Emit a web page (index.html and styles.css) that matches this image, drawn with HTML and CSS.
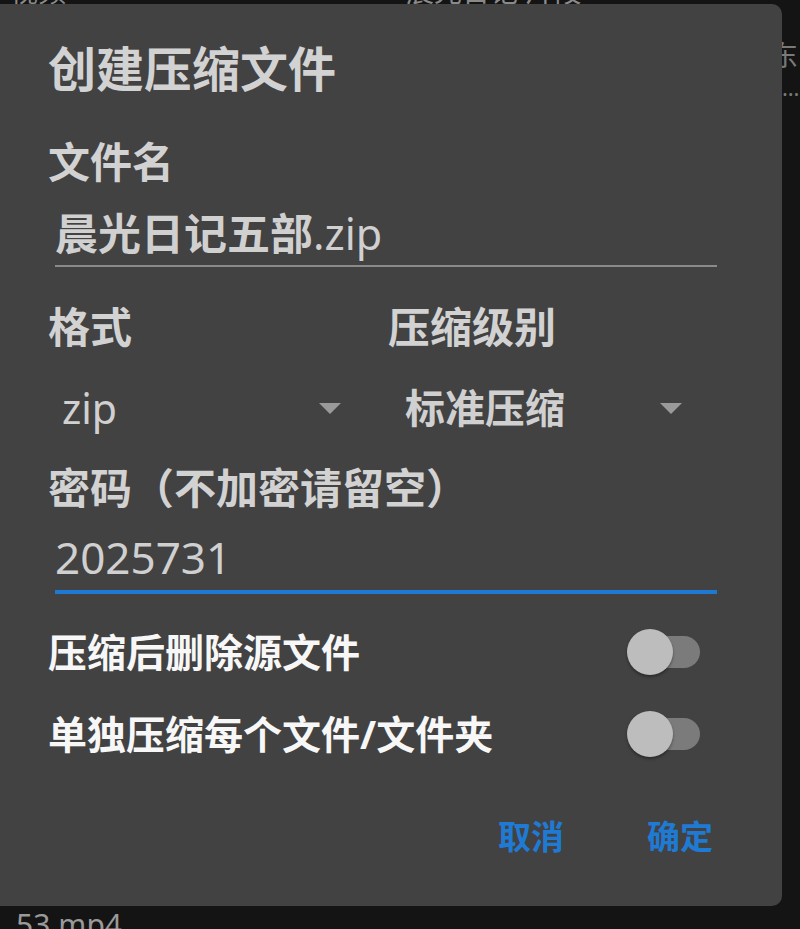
FILE: index.html
```html
<!DOCTYPE html>
<html lang="zh-CN">
<head>
<meta charset="utf-8">
<title>创建压缩文件</title>
<link rel="stylesheet" href="styles.css">
</head>
<body>
<div class="screen">
  <div class="bg">
    <div class="bg-top">
      <span class="bg-frag bg-frag-a">视频</span>
      <span class="bg-frag bg-frag-b">晨光日记·片段</span>
    </div>
    <div class="bg-side">
      <span class="bg-side-char">东</span>
      <span class="bg-side-dots">…</span>
    </div>
    <div class="bg-bottom">
      <span class="bg-file">53.mp4</span>
    </div>
  </div>

  <div class="dialog">
    <div class="title">创建压缩文件</div>

    <div class="label label-first">文件名</div>
    <div class="field"><span class="cjk">晨光日记五部</span>.zip</div>

    <div class="pair-labels">
      <div class="label">格式</div>
      <div class="label">压缩级别</div>
    </div>
    <div class="pair-spinners">
      <div class="spinner spinner-a"><span class="spinner-text latin">zip</span><span class="tri"></span></div>
      <div class="spinner spinner-b"><span class="spinner-text cjk">标准压缩</span><span class="tri"></span></div>
    </div>

    <div class="label label-pass">密码（不加密请留空）</div>
    <div class="field field-active">2025731</div>

    <div class="switch-row switch-row-first">
      <span class="switch-label">压缩后删除源文件</span>
      <span class="switch"><span class="track"></span><span class="thumb"></span></span>
    </div>
    <div class="switch-row switch-row-second">
      <span class="switch-label">单独压缩每个文件/文件夹</span>
      <span class="switch"><span class="track"></span><span class="thumb"></span></span>
    </div>

    <div class="actions">
      <span class="btn">取消</span>
      <span class="btn">确定</span>
    </div>
  </div>
</div>
</body>
</html>
```

FILE: styles.css
```css
* { box-sizing: border-box; }

html, body {
  margin: 0;
  padding: 0;
  background: #141414;
}

body {
  width: 800px;
  height: 929px;
  overflow: hidden;
  font-family: "Noto Sans", "Noto Sans CJK SC", sans-serif;
}

.screen {
  position: relative;
  width: 800px;
  height: 929px;
  overflow: hidden;
}

/* background file list (mostly covered by the dialog) */
.bg {
  display: flex;
  flex-direction: column;
  height: 929px;
  color: #8a8a8a;
}

.bg-top {
  display: flex;
  height: 30px;
  margin-top: -24px;
  font-size: 28px;
  line-height: 30px;
}

.bg-frag-a { margin-left: 10px; }
.bg-frag-b { margin-left: 340px; }

.bg-side {
  display: flex;
  flex-direction: column;
  align-items: flex-start;
  margin-left: 770px;
  margin-top: 32px;
  color: #7a7a7a;
}

.bg-side-char {
  font-size: 28px;
  line-height: 34px;
}

.bg-side-dots {
  margin-top: 2px;
  margin-left: 12px;
  font-size: 22px;
  line-height: 26px;
}

.bg-bottom {
  margin-top: auto;
  height: 24px;
  padding-left: 16px;
  font-size: 30px;
  line-height: 40px;
  color: #9a9a9a;
}

/* dialog */
.dialog {
  position: absolute;
  left: 0;
  top: 4px;
  width: 782px;
  height: 902px;
  background: #424242;
  border-radius: 0 10px 10px 0;
  padding: 0 65px 0 48px;
  display: flex;
  flex-direction: column;
}

.title {
  margin-top: 35px;
  height: 60px;
  font-size: 48px;
  line-height: 60px;
  font-weight: 700;
  color: #d2d2d2;
  white-space: nowrap;
}

.label {
  height: 50px;
  font-size: 42px;
  line-height: 50px;
  font-weight: 700;
  color: #d2d2d2;
  white-space: nowrap;
}

.label-first { margin-top: 38px; }

.field {
  margin-left: 7px;
  height: 59px;
  padding-bottom: 5px;
  border-bottom: 2px solid #8a8a8a;
  font-size: 43px;
  line-height: 52px;
  color: #d0d0d0;
  white-space: nowrap;
}

.cjk { font-weight: 700; }

.label + .field { margin-top: 21px; }

.pair-labels {
  margin-top: 35px;
  display: grid;
  grid-template-columns: 340px 1fr;
}

.pair-spinners {
  margin-top: 26px;
  display: grid;
  grid-template-columns: 307px 309px;
  column-gap: 33px;
  height: 60px;
}

.spinner {
  display: flex;
  align-items: center;
  justify-content: space-between;
  height: 60px;
}

.spinner-a { padding-left: 14px; padding-right: 14px; }
.spinner-b { padding-left: 17px; padding-right: 15px; }

.spinner-text {
  font-size: 40px;
  line-height: 60px;
  color: #d0d0d0;
  white-space: nowrap;
}

.spinner-text.latin { font-size: 41px; }

.tri {
  width: 0;
  height: 0;
  border-left: 11px solid transparent;
  border-right: 11px solid transparent;
  border-top: 11px solid #9a9a9a;
}

.label-pass { margin-top: 25px; }

.field-active {
  margin-top: 18px;
  height: 63px;
  padding-bottom: 7px;
  border-bottom: 4px solid #1f78d2;
  font-size: 44px;
}

.label + .field-active { margin-top: 18px; }

.switch-row {
  display: flex;
  align-items: center;
  justify-content: space-between;
  height: 70px;
  padding-right: 17px;
}

.switch-row-first { margin-top: 23px; }
.switch-row-second { margin-top: 12px; }

.switch-label {
  font-size: 39px;
  line-height: 50px;
  font-weight: 700;
  color: #f7f7f7;
  white-space: nowrap;
}

.switch {
  position: relative;
  display: block;
  width: 73px;
  height: 46px;
}

.track {
  position: absolute;
  right: 0;
  top: 7px;
  width: 62px;
  height: 32px;
  border-radius: 16px;
  background: #7b7b7b;
}

.thumb {
  position: absolute;
  left: 0;
  top: 0;
  width: 46px;
  height: 46px;
  border-radius: 50%;
  background: #bdbdbd;
  box-shadow: 0 2px 3px rgba(0, 0, 0, 0.35);
}

.actions {
  margin-top: 38px;
  height: 60px;
  display: flex;
  justify-content: flex-end;
  align-items: center;
  gap: 83px;
  padding-right: 4px;
}

.btn {
  font-size: 33px;
  line-height: 60px;
  font-weight: 700;
  color: #1f7ad4;
  white-space: nowrap;
}
```
